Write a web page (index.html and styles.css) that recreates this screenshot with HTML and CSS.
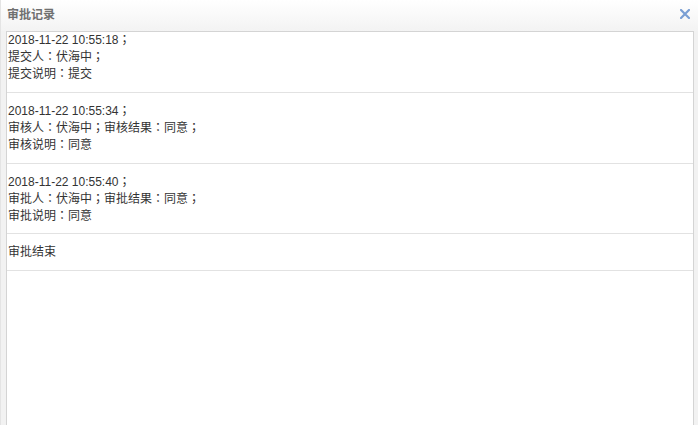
FILE: index.html
```html
<!DOCTYPE html>
<html lang="zh">
<head>
<meta charset="utf-8">
<title>审批记录</title>
<link rel="stylesheet" href="styles.css">
</head>
<body>
<div class="dialog">
  <div class="header">
    <span class="title">审批记录</span>
    <span class="close" aria-label="关闭">
      <svg width="10" height="10" viewBox="0 0 10 10"><path d="M1 1L9 9M9 1L1 9" stroke="#7a9fd4" stroke-width="2.2" stroke-linecap="square"/></svg>
    </span>
  </div>
  <div class="content">
    <div class="record first">
      <div>2018-11-22 10:55:18；</div>
      <div>提交人：伏海中；</div>
      <div>提交说明：提交</div>
    </div>
    <div class="record">
      <div>2018-11-22 10:55:34；</div>
      <div>审核人：伏海中；审核结果：同意；</div>
      <div>审核说明：同意</div>
    </div>
    <div class="record">
      <div>2018-11-22 10:55:40；</div>
      <div>审批人：伏海中；审批结果：同意；</div>
      <div>审批说明：同意</div>
    </div>
    <div class="record">
      <div>审批结束</div>
    </div>
  </div>
</div>
</body>
</html>
```
FILE: styles.css
```css
html, body {
  margin: 0;
  padding: 0;
  background: #fff;
}
.dialog {
  width: 698px;
  height: 425px;
  display: flex;
  flex-direction: column;
  background: #f2f2f2;
  box-sizing: border-box;
  border-left: 1px solid #e4e4e4;
  overflow: hidden;
}
.header {
  height: 31px;
  flex: none;
  display: flex;
  align-items: center;
  justify-content: space-between;
  padding: 0 8px 0 6px;
  background: linear-gradient(#ffffff, #f3f3f3);
}
.title {
  font-family: "Noto Sans CJK SC", "Liberation Sans", sans-serif;
  font-size: 12px;
  font-weight: bold;
  color: #707070;
  line-height: 16px;
  margin-top: -3px;
}
.close {
  display: flex;
  margin-top: -3px;
}
.content {
  flex: 1;
  margin: 0 4px 0 5px;
  border: 1px solid #d4d4d4;
  border-bottom: none;
  background: #fff;
  font-family: "Liberation Sans", "Noto Sans CJK TC", sans-serif;
  font-size: 12px;
  line-height: 17px;
  color: #333;
  text-spacing-trim: space-all;
  font-feature-settings: "locl" 0, "halt" 0, "chws" 0;
}
.record {
  padding: 10px 0 8.5px 1px;
  border-bottom: 1px solid #e2e2e2;
}
.record.first {
  padding-top: 0;
  padding-bottom: 9px;
}
```
